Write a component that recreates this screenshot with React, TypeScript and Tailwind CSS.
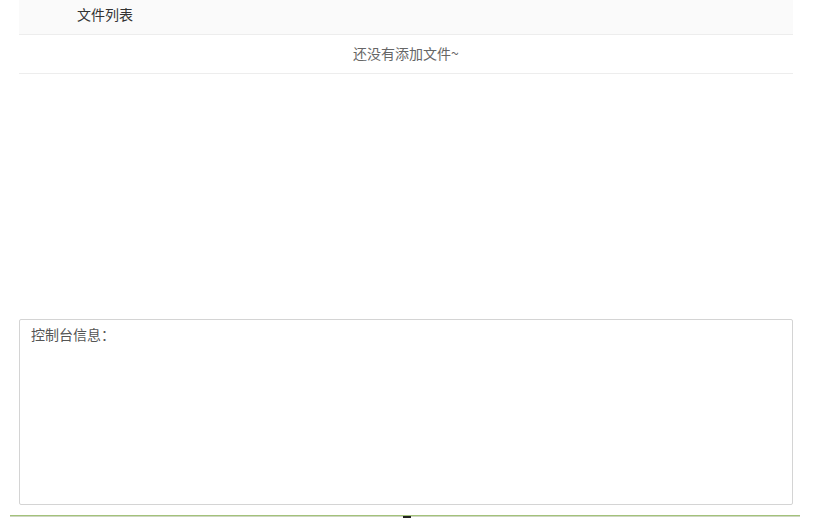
export default function App() {
  return (
    <div
      className="h-[519px] w-[828px] overflow-hidden bg-white text-[14px]"
      style={{ fontFamily: '"Noto Sans CJK SC", "Noto Sans", sans-serif' }}
    >
      <div className="ml-[19px] w-[774px]">
        {/* file table */}
        <div className="h-[319px]">
          <div className="flex h-[35px] items-center border-b border-[#ededed] bg-[#fafafa] pb-[6px] pl-[58px] text-[#333]">
            文件列表
          </div>
          <div className="flex h-[39px] items-center justify-center border-b border-[#ededed] pb-[2px] text-[#666]">
            还没有添加文件~
          </div>
        </div>

        {/* console */}
        <div className="h-[186px] rounded-[2px] border border-[#d4d4d4] px-[11px] pt-[4px] text-[#555]">
          控制台信息：
        </div>
      </div>

      {/* bottom bar */}
      <div className="relative ml-[10px] mt-[10px] w-[790px]">
        <div className="h-px bg-[#a3c27a]" />
        <div className="h-px bg-[#cfd6c4]" />
        <div className="absolute left-[393px] top-px h-[2px] w-[8px] bg-[#222]" />
      </div>
    </div>
  );
}
